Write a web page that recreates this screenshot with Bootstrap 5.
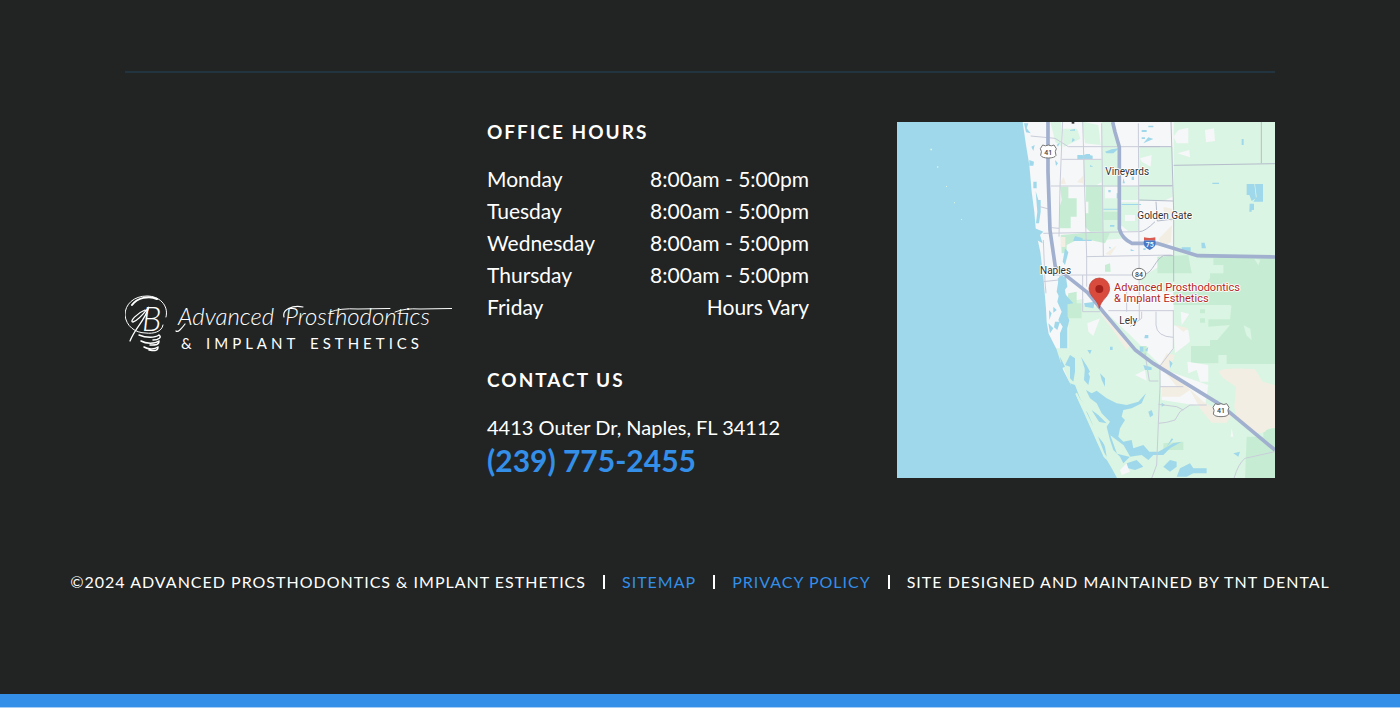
<!DOCTYPE html>
<html lang="en">
<head>
<meta charset="utf-8">
<meta name="viewport" content="width=device-width, initial-scale=1">
<title>Advanced Prosthodontics &amp; Implant Esthetics</title>
<link href="https://cdn.jsdelivr.net/npm/bootstrap@5.3.0/dist/css/bootstrap.min.css" rel="stylesheet">
<style>
body{background:#212423;color:#fff;font-family:Lato,"Open Sans",sans-serif;font-size:21px;line-height:32px}
.site-footer{padding-top:71px}
.footer-inner{max-width:1150px;border-top:2px solid #21343f;padding-top:49px}
.footer-grid{display:grid;grid-template-columns:362fr 410fr 378fr}
.brand-cell{padding:48px 35px 0 0}
.brand-cell svg,.map-link svg{display:block;width:100%;height:auto}
.info-cell{padding-right:88px}
.site-footer h2{font-size:19px;line-height:20px;font-weight:700;letter-spacing:2px;margin-bottom:21px}
.hours{margin-bottom:47px}
.hours th{font-weight:400}
.address{font-size:20px}
.phone{color:#348fe9;font-size:30px;font-weight:700;line-height:34px}
.legal{font-size:16px;line-height:24px;letter-spacing:1px;padding:92px 0 100px;column-gap:17px}
.legal a{color:#348fe9}
.divider{width:2px;height:14px;background:#fff}
.accent{height:14px;background:#348fe9;border-bottom:1px solid #a5cdf6}
@media (max-width:991px){.footer-grid{grid-template-columns:1fr;gap:32px;padding:0 24px}.brand-cell,.info-cell{padding:0}}
</style>
</head>
<body>
<footer class="site-footer">
<div class="footer-inner mx-auto">
<div class="footer-grid">
<div class="brand-cell d-flex align-items-center">
<a class="d-block w-100" href="#" aria-label="Advanced Prosthodontics &amp; Implant Esthetics">
<svg viewBox="0 0 327 58" fill="none" stroke="#fff" stroke-linecap="round">
<path d="M41 22C44 10 34 1 22 1C9 1 0 9 0 20C1 31 10 38 21 38C28 39 37 37 38 30" stroke-width="1"/>
<path d="M7 10C12 3 24 0 32 4" stroke-width="2"/>
<path d="M20 15C12 18 4 27 8 27C13 26 20 17 24 12C19 27 10 33 5 46" stroke-width="1.3"/>
<path d="M14 40C21 43 30 43 34 40M34 40C37 42 34 45 28 45M16 46C21 49 30 49 34 46M34 46C34 50 31 50 25 50M19 52C24 55 30 54 33 52M33 52C33 56 30 56 24 55" stroke-width="1.5"/>
<g fill="#fff" stroke="none" font-family="Lato, sans-serif" font-weight="300">
<text x="17" y="36" font-size="33" font-style="italic">B</text>
<text x="53" y="30" font-size="24" font-style="italic">Advanced</text>
<text x="160" y="30" font-size="24" font-style="italic">Prosthodontics</text>
<text x="56" y="54" font-size="15" font-weight="400">&amp;</text>
<text x="81" y="54" font-size="15" font-weight="400" letter-spacing="4">IMPLANT</text>
<text x="185" y="54" font-size="15" font-weight="400" letter-spacing="4">ESTHETICS</text>
</g>
<path d="M51 36C53 38 57 33 60 29M159 22C157 14 168 10 178 12" stroke-width="1.2"/>
<path d="M205 17Q215 13 233 14L265 13.500M270 17Q280 13 295 14L327 13.500" stroke-width="1"/>
</svg></a>
</div>
<div class="info-cell">
<h2>OFFICE HOURS</h2>
<table class="hours w-100"><tbody>
<tr><th class="p-0" scope="row">Monday</th><td class="p-0 text-end">8:00am - 5:00pm</td></tr>
<tr><th class="p-0" scope="row">Tuesday</th><td class="p-0 text-end">8:00am - 5:00pm</td></tr>
<tr><th class="p-0" scope="row">Wednesday</th><td class="p-0 text-end">8:00am - 5:00pm</td></tr>
<tr><th class="p-0" scope="row">Thursday</th><td class="p-0 text-end">8:00am - 5:00pm</td></tr>
<tr><th class="p-0" scope="row">Friday</th><td class="p-0 text-end">Hours Vary</td></tr>
</tbody></table>
<h2>CONTACT US</h2>
<div class="address">4413 Outer Dr, Naples, FL 34112</div>
<a class="phone d-block text-decoration-none" href="tel:2397752455">(239) 775-2455</a>
</div>
<a class="map-link" href="#" aria-label="Map of our office">
<svg viewBox="0 0 1134 1068">
<rect width="1134" height="1068" fill="#f6f7f8"/>
<!-- parkland -->
<g fill="#daf5e3">
<path d="M827 0H1134V1068H640L474 679H514V545L610 555L700 640L790 730L830 680V0Z"/>
<g transform="translate(549 -21)">
<path d="M65 20H97L118 95V350H65ZM122 212H178V255H122ZM178 97H278V245L250 258H178ZM122 262H176V348H145L122 330ZM5 20L55 30L62 90L15 85ZM10 135H68V200L45 212H10ZM70 350L120 350L135 370L70 375ZM178 490L280 430V530H190Z"/>
</g>
<path d="M460 0H492L495 75L475 60ZM495 20H540L550 50L500 75ZM510 540L560 530V620L510 610Z"/>
</g>
<g fill="#c6edd3">
<g transform="translate(339 -6)"><path d="M150 200H175V235H200V290H182V325H148V265L155 240ZM228 195H278V335H240L225 320V280H235V245H228ZM152 345L230 338H300L285 370L240 360H200L170 375V400H155ZM175 520L200 515V550H215V595H170V555ZM285 435L300 430L302 455L285 455ZM280 275H325V300H280Z"/></g>
<g transform="translate(549 -21)"><path d="M232 425L325 420L335 475H232ZM360 422H585V600H500L450 570H280V530H360L390 490V475H430V450H400V430H360Z"/></g>
<g transform="translate(549 504)"><path d="M390 0H585V222H440V195H415V220H333V168H390V150H412L450 105L385 110V88H450L455 40L485 35L510 10H390ZM360 58H375V70H360ZM360 85H375V98H360ZM500 440H550V422L585 413V565H495ZM250 460L310 455V480H250ZM178 168H200V195H178Z"/></g>
</g>
<g fill="#daf5e3"><path d="M1072 410L1090 413L1084 430ZM1040 610L1060 620L1064 655L1048 640Z"/></g>
<!-- built-up clearings -->
<g fill="#f6f7f8">
<g transform="translate(549 -21)"><path d="M280 65L295 45L325 38V85H290ZM375 45L402 40L405 78L378 82ZM292 115L328 105L330 127ZM180 130L215 120L212 155L185 140ZM135 300H165V318H135ZM75 215H115V250H75Z"/></g>
<g transform="translate(549 504)"><path d="M302 65L328 72L305 105ZM280 105L325 120L330 155L285 190ZM22 100L60 85L40 138L25 125ZM322 215L385 225V275H360L350 240L325 250ZM165 255L195 240L200 272ZM240 235L385 285L375 350L245 330ZM120 540L140 520L150 545L125 555ZM455 415L460 440H452Z"/></g>
</g>
<!-- dry ground -->
<g fill="#f3eee4" transform="translate(549 504)">
<path d="M415 245Q430 230 525 238L548 275L585 285V415Q565 410 555 425Q525 438 505 418L470 385L463 350L468 290L430 265ZM60 70L85 75L150 165L140 180L105 130ZM240 225L260 190L285 195L265 245L300 270L370 335L415 360L455 375L440 398H395L360 355L330 300L300 320H245V290H290ZM285 105L325 115L310 125Z"/>
</g>
<path fill="#f3eee4" d="M487 187L500 165L507 185ZM540 180L560 160L567 187ZM491 345H505V375H491ZM800 255L825 260V300L800 280ZM785 350L825 310L822 360L795 375ZM625 395L660 370L640 400Z"/>
<!-- gulf, bays and lakes -->
<g fill="#9fd8ea">
<path d="M0 0H377L387 69L397 129L404 209L412 270L417 330L430 390L439 465L447 560L449 600L455 635L478 680L499 745L535 815L560 870L580 900L600 960L630 1015L645 1040L660 1068H0Z"/>
<g transform="translate(-21 -21)"><path d="M402 25H415L410 40L422 55L408 52ZM424 95L434 90L430 108ZM418 135L432 140L430 152H418ZM430 200H440V220H430ZM437 228L445 255H452V290L447 325H438L442 290ZM435 340L460 350L450 360L458 385L440 375ZM562 120H577V133H562ZM587 117H600V125H587ZM495 135L504 145L498 153ZM540 45L555 42V47H540ZM548 68L555 75L545 82ZM500 90L510 82L504 95ZM555 363L578 370V376H550ZM550 375H600V378H550ZM525 400L535 412L525 450L518 440ZM507 485L520 480L527 540L550 565L520 570L500 530Z"/></g>
<g transform="translate(549 -21)"><path d="M500 207H523L528 250L515 258L508 240H500ZM525 207H549V260H520L530 245ZM509 266H522V285H515V290H508ZM485 72H491V90H485ZM397 203H417V207H397ZM305 397H332V410H305ZM364 383H374L378 400H365ZM75 110L95 103L117 100L100 115H80ZM125 267H183V270H125ZM70 281H118V284H70ZM0 122L20 118L38 122V132H0ZM185 45H200V51H185ZM205 67L220 72L190 85ZM185 67H195V72H185ZM205 32H220V37H205ZM110 235H118V250H110ZM130 190L135 205H128ZM155 185H162V195H155ZM30 150L40 155H30ZM85 225H92V232H85ZM90 330H103V335H90ZM0 374H35V378H0ZM152 402L164 408H152ZM190 400H197V405H190ZM88 395L95 400H88Z"/></g>
<g transform="translate(339 -6)"><path d="M143 475L168 470L172 500L160 515L172 530L173 590L178 600L172 625V685H150V640L158 620L145 600L155 575L142 545L150 510ZM117 570L125 580L118 600ZM130 560L140 570L130 578ZM115 610L130 625L120 640ZM135 605H150L142 630L132 622ZM222 550L255 545L250 565L225 560ZM232 690L245 690L240 703ZM165 735L180 705L195 715V755L190 785L180 775V740ZM180 790L195 795L210 835L192 820ZM225 740L240 770L235 795L222 780ZM150 710L165 740L155 745Z"/>
<path d="M228 810L245 820L260 812L290 835L320 850L350 855L385 845L408 820L395 850L365 865L340 870L335 890L345 900L330 925L325 950L340 965L365 960L370 985L400 975L418 995H445L490 970L515 965L480 985L460 1005H430L415 1020L395 1005L360 1010L340 1030L330 1010L310 990L300 960L290 920L300 905L275 880L260 850L240 835ZM213 710L232 740L240 755L230 765ZM270 760L285 775L285 800L275 780ZM200 820L220 850L240 895L265 935L285 980L290 1010L270 980L245 930L220 880ZM245 870L265 885L290 910L265 905ZM460 1040L480 1020L500 1025V1040L480 1055ZM510 1045L540 1030L550 1045H590V1060H550L530 1070H500ZM350 1030L380 1020L400 1040L375 1050L355 1045ZM405 645H415V655H403ZM390 680H400V695H390ZM405 690L415 680L412 695ZM478 720L488 730L480 745ZM400 735L425 742V750H405ZM300 680H308V690H300ZM415 875L425 870L430 885L420 892ZM670 1000L690 995L685 1010ZM470 980L485 955L490 958ZM455 848L465 855L455 860ZM615 840L625 843L620 850Z"/></g>
</g>
<g fill="#daf5e3"><path d="M545 825L565 850L590 875L610 905L620 925L595 905L580 880L560 860ZM580 890L600 900L635 965L645 1005L625 970L600 940ZM535 815L540 812L600 935L630 1015L620 1005ZM640 940L680 970L700 1005L660 995ZM100 80H105V85H100ZM120 133H124V137H120ZM147 192H150V195H147ZM171 241H174V244H171ZM192 291H195V294H192Z"/></g>
<!-- minor roads -->
<g fill="none" stroke="#c9cdda" stroke-width="3">
<g transform="translate(339 -6)"><path d="M62 48L135 55L175 80H450M155 118H275M123 198H485M218 0L230 410M158 0L150 200L147 350M275 10L280 410M385 10L388 600M100 340L385 335M228 410L485 405M125 323L147 325M100 360L105 485L108 520M105 450H130M130 465H395M218 465V575H270M295 572H490M100 485L145 480M90 260L120 268M350 575V500M230 410V500"/></g>
<g transform="translate(549 -21)"><path stroke="#b5bccb" d="M273 20L281 290V500M281 151L585 146M544 20V145M178 255L280 258M178 350Q195 350 225 320M228 260L232 318L280 312M195 478C220 470 225 435 250 422H280M178 95H275M178 212H278"/></g>
<g transform="translate(549 504)"><path d="M195 190L208 273H235M240 225V290L235 400L230 525L215 565M280 60V175L240 228M228 65V105Q230 140 280 142M185 65V85L150 110M235 400L260 397L285 390L300 365L330 345H380M240 290H310M235 343L290 350L310 360M585 485L495 505Q475 520 462 565"/></g>
</g>
<!-- highways -->
<g fill="none" stroke="#a1b0cf" stroke-width="11" stroke-linejoin="round">
<path d="M453 0V150L459 325L475 435L514 466L571 511L625 577L714 683L770 725L970 848L1134 984"/>
<path d="M647 0L654 30L667 75V320Q675 350 705 364H780L902 401L1134 405"/>
</g>
<!-- highway shields -->
<g fill="#fff" stroke="#777" stroke-width="3">
<path id="shield" d="M437 69Q445 74 454 69Q463 74 471 69L478 80Q472 88 477 100Q473 108 454 108Q435 108 431 100Q436 88 430 80Z"/>
<use href="#shield" x="518" y="776"/>
<ellipse cx="726" cy="456" rx="20" ry="17"/>
</g>
<path d="M741 355H775Q781 374 758 384Q735 374 741 355Z" fill="#4678c8"/><path d="M741 346Q758 350 775 346V355H741Z" fill="#d85a50"/>
<g font-family="Roboto, sans-serif" font-size="30" fill="#333" stroke="#fff" stroke-width="5" stroke-linejoin="round" paint-order="stroke">
<text x="429" y="455">Naples</text><text x="625" y="160">Vineyards</text><text x="721" y="290">Golden Gate</text><text x="667" y="606">Lely</text>
</g>
<g font-family="Roboto, sans-serif" font-size="21" font-weight="500" fill="#444" text-anchor="middle"><text x="454" y="98">41</text><text x="972" y="874">41</text><text x="726" y="464">84</text><text x="758" y="374" fill="#fff">75</text></g>
<g font-family="Roboto, sans-serif" font-size="33" fill="#b3261e" stroke="#fff" stroke-width="5" stroke-linejoin="round" paint-order="stroke"><text x="651" y="508">Advanced Prosthodontics</text><text x="651" y="540">&amp; Implant Esthetics</text></g>
<path d="M607 559C604 535 576 524 576 499A31 31 0 0 1 638 499C638 524 610 535 607 559Z" fill="#d94c3d" stroke="#b93a30" stroke-width="2"/><circle cx="607" cy="501" r="12" fill="#a3211a"/>
<path d="M524 0H532V5H524Z" fill="#333"/>
</svg></a>
</div></div>
<div class="legal d-flex flex-wrap justify-content-center align-items-center"><span>©2024 ADVANCED PROSTHODONTICS &amp; IMPLANT ESTHETICS</span><span class="divider"></span><a class="text-decoration-none" href="#">SITEMAP</a><span class="divider"></span><a class="text-decoration-none" href="#">PRIVACY POLICY</a><span class="divider"></span><span>SITE DESIGNED AND MAINTAINED BY TNT DENTAL</span></div>
<div class="accent"></div>
</footer>
<script src="https://cdn.jsdelivr.net/npm/bootstrap@5.3.0/dist/js/bootstrap.bundle.min.js"></script>
</body>
</html>
